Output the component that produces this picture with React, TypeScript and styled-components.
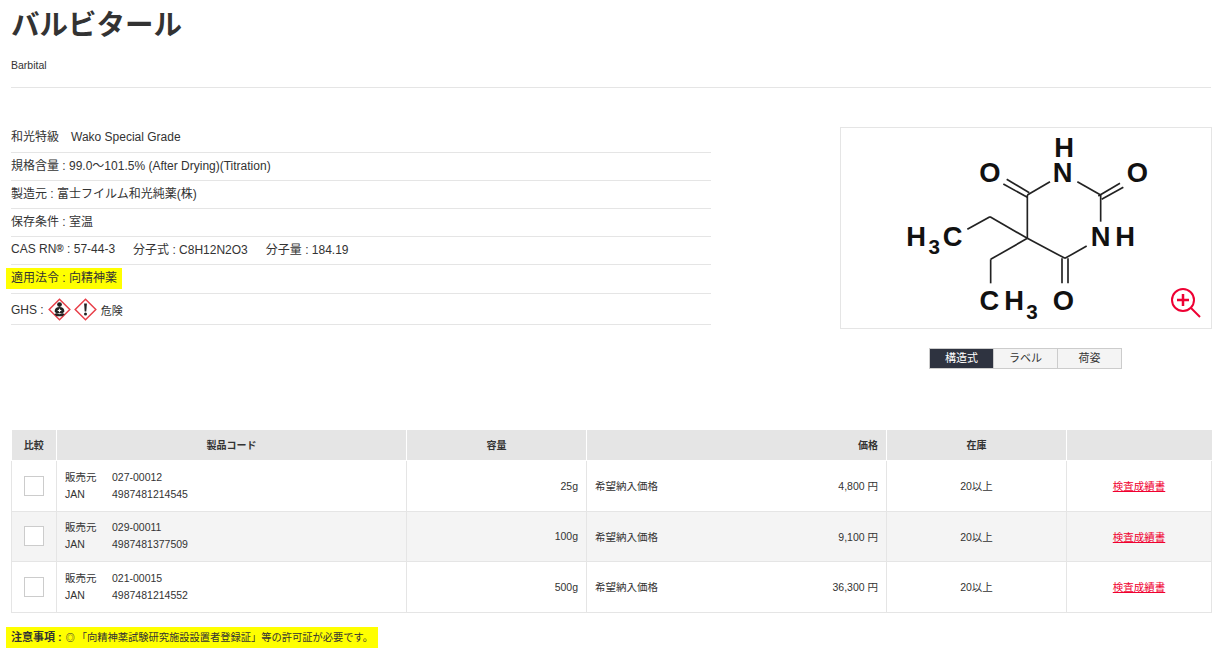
import React from 'react';
import styled, { createGlobalStyle } from 'styled-components';

const GlobalStyle = createGlobalStyle`
  html, body {
    margin: 0;
    padding: 0;
    background: #fff;
    color: #333;
    font-family: "Liberation Sans", "Noto Sans CJK JP", sans-serif;
  }
`;

const Page = styled.div`
  width: 1200px;
  padding: 0 0 0 11px;
`;

const Title = styled.h1`
  margin: 0;
  padding-top: 7px;
  height: 41px;
  font-size: 28.5px;
  line-height: 36px;
  font-weight: 700;
  color: #333;
`;

const EnglishName = styled.p`
  margin: 0;
  padding-top: 11px;
  height: 28px;
  font-size: 10.5px;
  line-height: 13px;
`;

const Rule = styled.hr`
  margin: 0 0 36px;
  border: 0;
  border-top: 1px solid #e5e5e5;
`;

const Summary = styled.section`
  display: flex;
  justify-content: space-between;
  align-items: flex-start;
  height: 306px;
`;

const SpecList = styled.ul`
  width: 700px;
  margin: 0;
  padding: 0;
  list-style: none;
  font-size: 12px;
`;

const SpecRow = styled.li<{ $height?: number; $pad?: number; $top?: number }>`
  display: flex;
  align-items: center;
  box-sizing: border-box;
  height: ${(p) => p.$height ?? 28}px;
  padding-top: ${(p) => p.$top ?? 0}px;
  padding-bottom: ${(p) => p.$pad ?? 4}px;
  border-bottom: 1px solid #e5e5e5;
  white-space: pre;
`;

const Marker = styled.span`
  display: inline-block;
  margin-left: -5px;
  padding: 0 5px;
  background: #ff0;
  line-height: 21px;
`;

const Sup = styled.sup`
  font-size: 10px;
  font-weight: 700;
  line-height: 0;
  vertical-align: 3px;
`;

const SpecGap = styled.span`
  margin-left: 18px;
`;

const GhsGroup = styled.span`
  display: inline-flex;
  gap: 3px;
  margin: 0 4px 0 4px;
`;

const DangerWord = styled.span`
  font-size: 11px;
`;

const Gallery = styled.div`
  width: 372px;
  margin: 3px -1px 0 0;
`;

const Figure = styled.div`
  position: relative;
  box-sizing: border-box;
  height: 202px;
  border: 1px solid #e5e5e5;
  background: #fff;
`;

const Structure = styled.svg`
  display: block;
  width: 370px;
  height: 200px;
`;

const ZoomMark = styled.svg`
  position: absolute;
  right: 10px;
  bottom: 10px;
  width: 30px;
  height: 30px;
`;

const Tabs = styled.div`
  display: flex;
  width: 193px;
  margin: 19px 0 0 89px;
  border: 1px solid #ccc;
  box-sizing: border-box;
`;

const Tab = styled.div<{ $active?: boolean }>`
  flex: 1;
  height: 19px;
  line-height: 19px;
  text-align: center;
  font-size: 11px;
  background: ${(p) => (p.$active ? '#2e3340' : '#f4f4f4')};
  color: ${(p) => (p.$active ? '#fff' : '#333')};
  & + & {
    border-left: 1px solid #ccc;
  }
`;

const Table = styled.table`
  width: 1200px;
  table-layout: fixed;
  border-collapse: collapse;
  font-size: 10.5px;
`;

const Head = styled.th<{ $align?: string }>`
  height: 30px;
  padding: 0 8px;
  box-sizing: border-box;
  background: #e5e5e5;
  border: 1px solid #fff;
  border-top: 0;
  font-size: 10px;
  font-weight: 700;
  text-align: ${(p) => p.$align ?? 'center'};
  &:first-child { border-left: 0; }
  &:last-child { border-right: 0; }
`;

const Row = styled.tr<{ $stripe?: boolean }>`
  background: ${(p) => (p.$stripe ? '#f4f4f4' : '#fff')};
`;

const Cell = styled.td<{ $align?: string; $height: number }>`
  height: ${(p) => p.$height}px;
  padding: 0 8px;
  box-sizing: border-box;
  border: 1px solid #e5e5e5;
  text-align: ${(p) => p.$align ?? 'left'};
`;

const Checkbox = styled.span`
  display: block;
  box-sizing: border-box;
  width: 20px;
  height: 20px;
  margin: 0 auto;
  background: #fff;
  border: 1px solid #ccc;
`;

const CodeGrid = styled.div`
  display: grid;
  grid-template-columns: 47px 1fr;
  line-height: 17px;
`;

const PriceLine = styled.div`
  display: flex;
  justify-content: space-between;
`;

const CertLink = styled.a`
  color: #f00030;
  text-decoration: underline;
`;

const Notice = styled.p`
  display: inline-block;
  margin: 14px 0 0 -5px;
  padding: 0 5px;
  background: #ff0;
  font-size: 10.25px;
  line-height: 20px;
`;

const Strong = styled.strong`
  font-size: 11px;
  font-weight: 700;
`;

const CircleMark = styled.span`
  display: inline-block;
  margin: 0 2px 0 1px;
  font-size: 9px;
  font-weight: 700;
`;

const HealthHazard = () => (
  <svg width="23" height="23" viewBox="0 0 23 23">
    <path d="M11.5 1.2 21.8 11.5 11.5 21.8 1.2 11.5Z" fill="#fff" stroke="#e8404a" strokeWidth="1.5" />
    <circle cx="11.5" cy="6.6" r="2.4" fill="#222" />
    <path d="M6.6 13.4c0-3 2-4.4 4.9-4.4s4.9 1.4 4.9 4.4l-1.6 1.8H8.2Z" fill="#222" />
    <path d="M6.2 16.2c1.4-1 2.6-1.2 3.4-.8l1.9.9 1.9-.9c.8-.4 2-.2 3.4.8l-2.4 2H8.6Z" fill="#222" />
    <path d="M11.5 10.2l.7 1.6 1.6.7-1.6.7-.7 1.6-.7-1.6-1.6-.7 1.6-.7Z" fill="#fff" />
  </svg>
);

const Exclamation = () => (
  <svg width="23" height="23" viewBox="0 0 23 23">
    <path d="M11.5 1.2 21.8 11.5 11.5 21.8 1.2 11.5Z" fill="#fff" stroke="#e8404a" strokeWidth="1.5" />
    <path d="M10.1 5.5h2.8l-.6 8h-1.6Z" fill="#222" />
    <circle cx="11.5" cy="16" r="1.5" fill="#222" />
  </svg>
);

// coordinates are 3x page pixels, measured off the picture
const bonds = [
  'M592 355V225',
  'M592 225 660 185',
  'M742 185 812 225',
  'M812 225V305',
  'M770 378 705 415',
  'M705 415 592 355',
  'M592 232 520 192',
  'M598 218 530 178',
  'M805 228 870 190',
  'M815 238 880 202',
  'M696 415V490',
  'M714 415V490',
  'M592 355 480 290',
  'M480 290 412 328',
  'M592 355 482 418',
  'M482 418V490',
];

const atoms: [number, number, string, number?][] = [
  [702, 110, 'H'],
  [698, 185, 'N'],
  [480, 185, 'O'],
  [922, 185, 'O'],
  [812, 378, 'N'],
  [885, 378, 'H'],
  [700, 570, 'O'],
  [258, 378, 'H'],
  [313, 403, '3', 62],
  [368, 378, 'C'],
  [478, 570, 'C'],
  [552, 570, 'H'],
  [606, 597, '3', 62],
];

const products = [
  { code: '027-00012', jan: '4987481214545', size: '25g', price: '4,800 円', height: 51 },
  { code: '029-00011', jan: '4987481377509', size: '100g', price: '9,100 円', height: 50 },
  { code: '021-00015', jan: '4987481214552', size: '500g', price: '36,300 円', height: 51 },
];

const columns = [45, 350, 180, 300, 180, 145];

export default function App() {
  return (
    <Page>
      <GlobalStyle />
      <Title>バルビタール</Title>
      <EnglishName>Barbital</EnglishName>
      <Rule />
      <Summary>
        <SpecList>
          <SpecRow $height={29} $pad={5}>和光特級　Wako Special Grade</SpecRow>
          <SpecRow>規格含量 : 99.0～101.5% (After Drying)(Titration)</SpecRow>
          <SpecRow>製造元 : 富士フイルム和光純薬(株)</SpecRow>
          <SpecRow>保存条件 : 室温</SpecRow>
          <SpecRow>
            CAS RN<Sup>®</Sup> : 57-44-3<SpecGap>分子式 : C8H12N2O3</SpecGap><SpecGap>分子量 : 184.19</SpecGap>
          </SpecRow>
          <SpecRow $height={29} $pad={2}>
            <Marker>適用法令 : 向精神薬</Marker>
          </SpecRow>
          <SpecRow $height={31} $pad={0} $top={1}>
            GHS :
            <GhsGroup>
              <HealthHazard />
              <Exclamation />
            </GhsGroup>
            <DangerWord>危険</DangerWord>
          </SpecRow>
        </SpecList>
        <Gallery>
          <Figure>
            <Structure viewBox="33 24 1110 600">
              <g fill="none" stroke="#222" strokeWidth="5">
                {bonds.map((d) => (
                  <path key={d} d={d} />
                ))}
              </g>
              {atoms.map(([x, y, label, size]) => (
                <text
                  key={`${x}-${y}`}
                  x={x}
                  y={y}
                  textAnchor="middle"
                  fontFamily="'Liberation Sans', sans-serif"
                  fontWeight="700"
                  fontSize={size ?? 82}
                  fill="#111"
                >
                  {label}
                </text>
              ))}
            </Structure>
            <ZoomMark viewBox="0 0 30 30" fill="none" stroke="#ee0033" strokeWidth="2">
              <circle cx="12" cy="12" r="11" />
              <path d="M20 20 29 29" />
              <path d="M12 6V18M6 12H18" strokeWidth="2.5" />
            </ZoomMark>
          </Figure>
          <Tabs>
            <Tab $active>構造式</Tab>
            <Tab>ラベル</Tab>
            <Tab>荷姿</Tab>
          </Tabs>
        </Gallery>
      </Summary>
      <Table>
        <colgroup>
          {columns.map((w, i) => (
            <col key={i} width={w} />
          ))}
        </colgroup>
        <thead>
          <tr>
            <Head>比較</Head>
            <Head>製品コード</Head>
            <Head>容量</Head>
            <Head $align="right">価格</Head>
            <Head>在庫</Head>
            <Head />
          </tr>
        </thead>
        <tbody>
          {products.map((p, i) => (
            <Row key={p.code} $stripe={i === 1}>
              <Cell $height={p.height}>
                <Checkbox />
              </Cell>
              <Cell $height={p.height}>
                <CodeGrid>
                  <span>販売元</span>
                  <span>{p.code}</span>
                  <span>JAN</span>
                  <span>{p.jan}</span>
                </CodeGrid>
              </Cell>
              <Cell $height={p.height} $align="right">{p.size}</Cell>
              <Cell $height={p.height}>
                <PriceLine>
                  <span>希望納入価格</span>
                  <span>{p.price}</span>
                </PriceLine>
              </Cell>
              <Cell $height={p.height} $align="center">20以上</Cell>
              <Cell $height={p.height} $align="center">
                <CertLink href="#">検査成績書</CertLink>
              </Cell>
            </Row>
          ))}
        </tbody>
      </Table>
      <Notice>
        <Strong>注意事項 : </Strong>
        <CircleMark>◎</CircleMark>「向精神薬試験研究施設設置者登録証」等の許可証が必要です。
      </Notice>
    </Page>
  );
}
